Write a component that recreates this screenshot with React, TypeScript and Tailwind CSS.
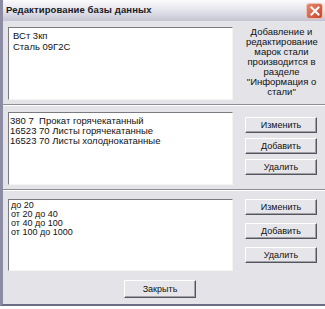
const FONT = { fontFamily: '"Liberation Sans", Arial, sans-serif' };

const NOTE = ["Добавление и", "редактирование", "марок стали", "производится в", "разделе", "\"Информация о", "стали\""];

function ListBox({ items, className }: { items: string[]; className: string }) {
  return (
    <div
      className={`border border-t-[#7a7a80] border-l-[#7a7a80] border-b-[#f4f4f0] border-r-[#f4f4f0] bg-white ${className}`}
    >
      {items.map((t) => (
        <div key={t} className="whitespace-pre text-[9.5px] text-[#111]">
          {t}
        </div>
      ))}
    </div>
  );
}

function Btn({ label, className = "" }: { label: string; className?: string }) {
  return (
    <button
      className={`flex h-[16px] w-[72px] items-center justify-center border border-t-white border-l-white border-b-[#55555c] border-r-[#55555c] bg-[#e6e6ea] text-[9px] leading-none text-[#111] shadow-[inset_-1px_-1px_0_#a0a0a8] ${className}`}
    >
      {label}
    </button>
  );
}

function Separator() {
  return <div className="h-[2px] border-t border-t-[#8e8e98] border-b border-b-white" />;
}

export default function App() {
  return (
    <div className="h-[309px] w-[325px] bg-white" style={FONT}>
      <div className="flex h-[306px] flex-col border-l-[3px] border-b-[2px] border-l-[#8c8ca4] border-b-[#6c6c84] bg-[#e3e3e8]">
        {/* title bar */}
        <div className="flex h-[21px] items-center justify-between bg-gradient-to-b from-[#fbfbfd] via-[#e4e4ec] to-[#c4c4d2] pl-[3px] pr-[2px]">
          <span className="text-[9.5px] font-bold tracking-[0.1px] text-[#1a1a22]">
            Редактирование базы данных
          </span>
          <div className="flex h-[16px] w-[17px] items-center justify-center rounded-[3px] border border-[#f0c0b0] bg-gradient-to-br from-[#e88a70] to-[#c2432a]">
            <svg width="10" height="10" viewBox="0 0 10 10">
              <path d="M1.5 1.5 L8.5 8.5 M8.5 1.5 L1.5 8.5" stroke="white" strokeWidth="2" strokeLinecap="square" />
            </svg>
          </div>
        </div>

        {/* section 1 */}
        <div className="flex pl-[5px] pt-[6px]">
          <ListBox
            items={["ВСт 3кп", "Сталь 09Г2С"]}
            className="h-[73px] w-[225px] px-[4px] pt-[2px] [&>div]:leading-[11px]"
          />
          <div className="ml-[13px] w-[71px] text-center text-[9.5px] leading-[10px] text-[#111]">
            {NOTE.map((l) => (
              <div key={l} className="whitespace-nowrap">
                {l}
              </div>
            ))}
          </div>
        </div>

        <div className="mt-[4px]">
          <Separator />
        </div>

        {/* section 2 */}
        <div className="flex pl-[5px] pt-[6px]">
          <ListBox
            items={["380 7  Прокат горячекатанный", "16523 70 Листы горячекатанные", "16523 70 Листы холоднокатанные"]}
            className="h-[73px] w-[225px] px-[1px] pt-[3px] [&>div]:leading-[10px]"
          />
          <div className="ml-[12px] flex flex-col gap-[5px] pt-[5px]">
            <Btn label="Изменить" />
            <Btn label="Добавить" />
            <Btn label="Удалить" />
          </div>
        </div>

        <div className="mt-[4px]">
          <Separator />
        </div>

        {/* section 3 */}
        <div className="flex pl-[5px] pt-[8px]">
          <ListBox
            items={["до 20", "от 20 до 40", "от 40 до 100", "от 100 до 1000"]}
            className="h-[72px] w-[225px] px-[2px] pt-[1px] [&>div]:text-[9px] [&>div]:leading-[9px]"
          />
          <div className="ml-[12px] flex flex-col gap-[8px]">
            <Btn label="Изменить" />
            <Btn label="Добавить" />
            <Btn label="Удалить" />
          </div>
        </div>

        <div className="flex justify-center pt-[9px] pr-[8px]">
          <Btn label="Закрыть" className="h-[18px] w-[62px]" />
        </div>
      </div>
    </div>
  );
}
